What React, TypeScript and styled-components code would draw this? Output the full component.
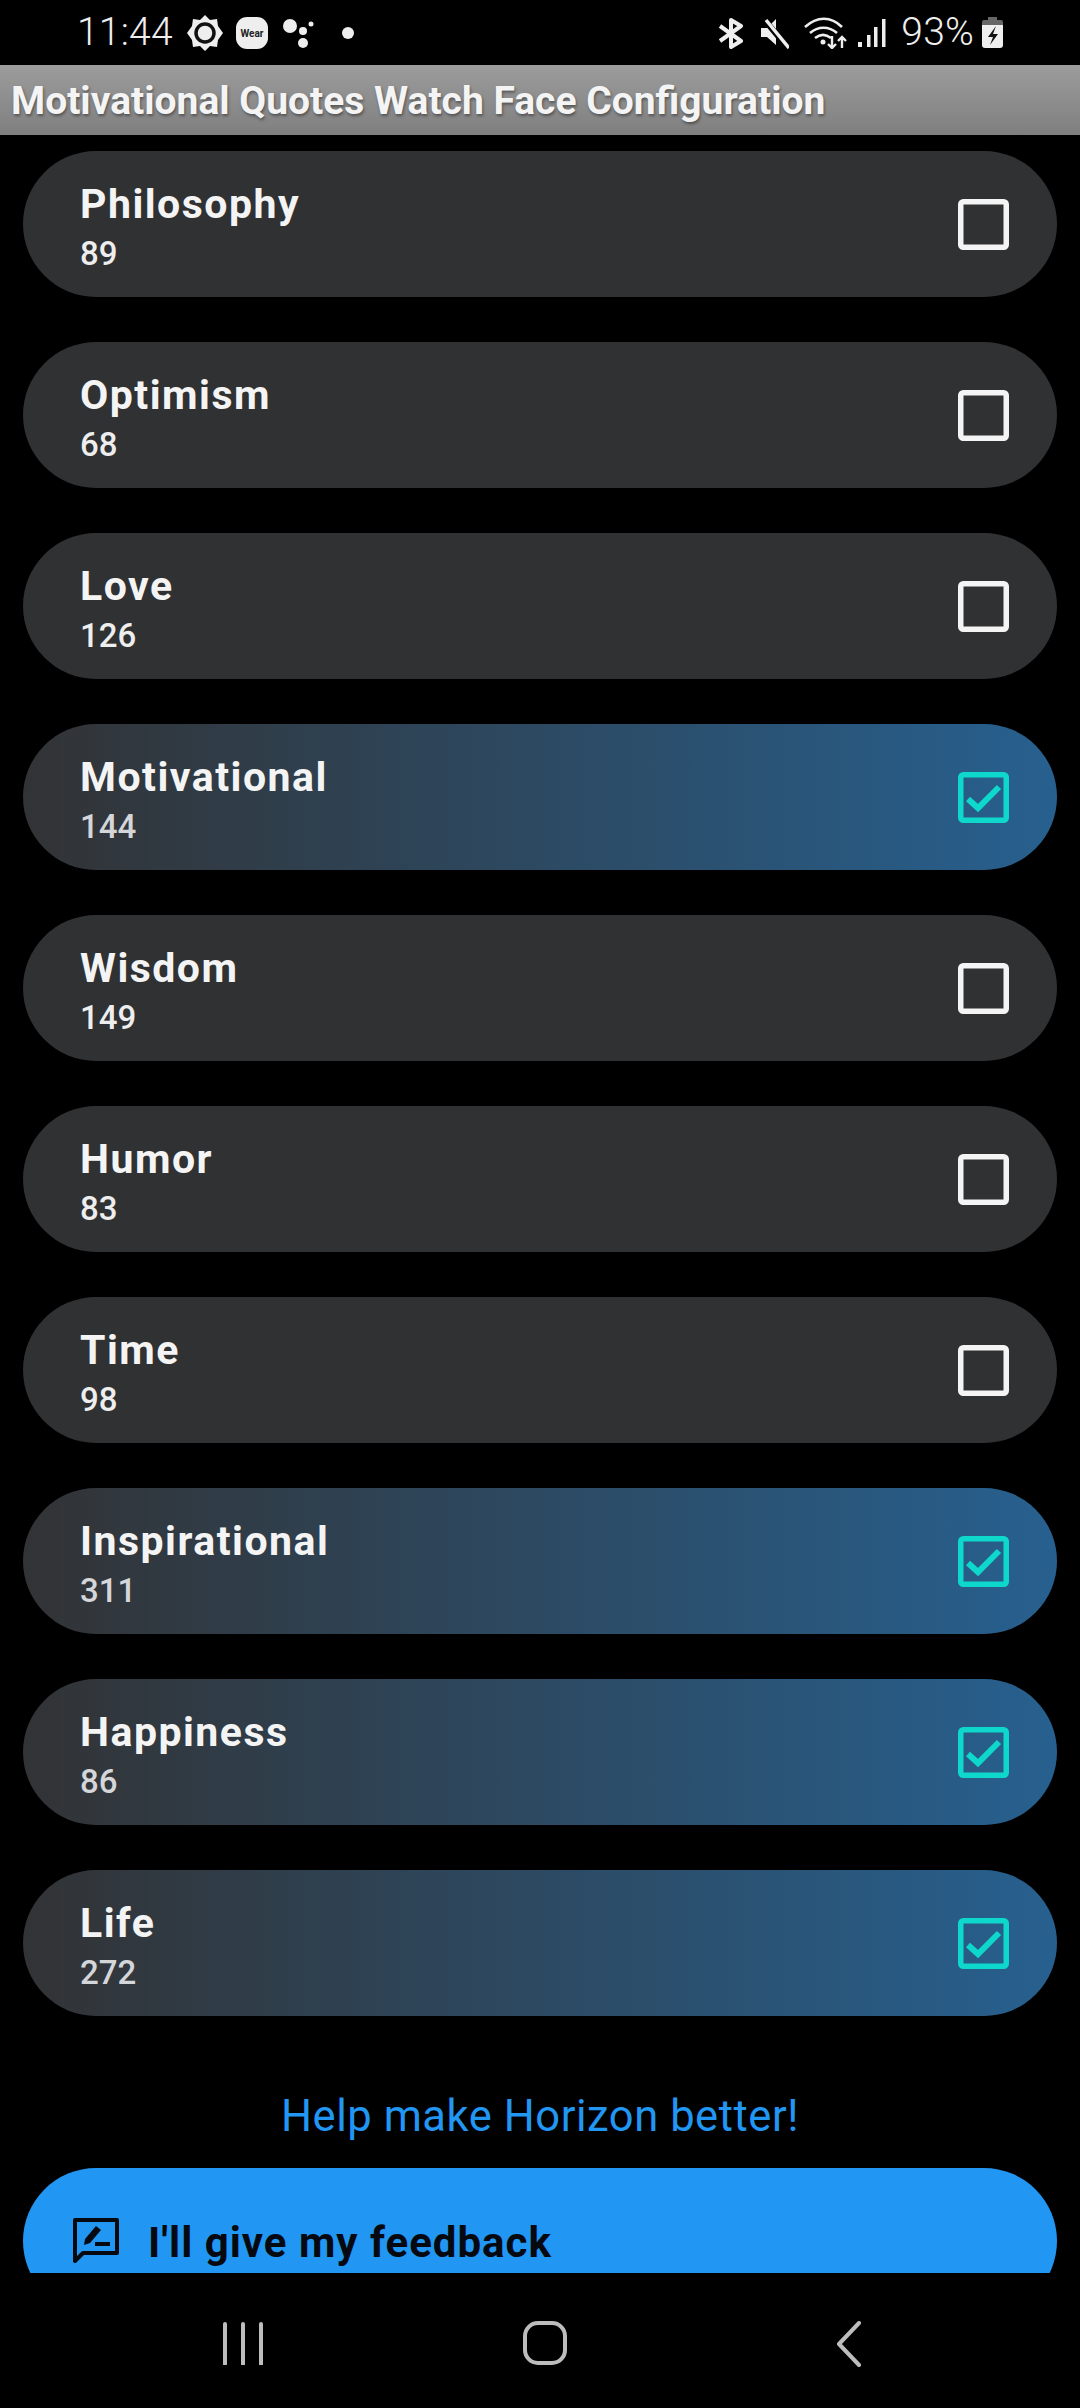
import styled, { createGlobalStyle } from "styled-components";

const GlobalStyle = createGlobalStyle`
  html, body {
    margin: 0;
    padding: 0;
    background: #000;
    font-family: Roboto, "Liberation Sans", sans-serif;
  }
`;

const Page = styled.div`
  width: 1080px;
  height: 2408px;
  display: flex;
  flex-direction: column;
  background: #000;
  overflow: hidden;
`;

const StatusBar = styled.div`
  height: 65px;
  flex: none;
  display: flex;
  align-items: center;
  justify-content: space-between;
  padding: 0 77px;
  color: #eee;
`;

const StatusGroup = styled.div`
  display: flex;
  align-items: center;
`;

const StatusText = styled.span<{ $left?: number }>`
  margin-left: ${(p) => p.$left ?? 0}px;
  font-size: 39px;
  font-weight: 300;
  line-height: 65px;
  letter-spacing: 0.2px;
`;

const StatusIcon = styled.svg<{ $left?: number }>`
  display: block;
  flex: none;
  margin-left: ${(p) => p.$left ?? 0}px;
`;

const Header = styled.header`
  height: 70px;
  flex: none;
  display: flex;
  align-items: center;
  padding-left: 11px;
  background: linear-gradient(#9c9c9c, #7f7f7f);
`;

const HeaderTitle = styled.h1`
  margin: 0;
  padding-top: 2px;
  color: #f4f4f4;
  font-size: 39px;
  font-weight: 700;
  line-height: 68px;
  white-space: nowrap;
  text-shadow: 1px 2px 3px rgba(0, 0, 0, 0.4);
`;

const Content = styled.main`
  flex: 1;
  min-height: 0;
  overflow: hidden;
  padding: 16px 23px 0;
`;

const List = styled.div`
  display: flex;
  flex-direction: column;
  gap: 45px;
`;

const Row = styled.div<{ $checked: boolean }>`
  height: 146px;
  display: flex;
  align-items: center;
  justify-content: space-between;
  padding: 0 48px 0 57px;
  border-radius: 73px;
  background: ${(p) =>
    p.$checked ? "linear-gradient(90deg, #323335, #27608f)" : "#303133"};
`;

const RowText = styled.div`
  display: flex;
  flex-direction: column;
  padding-top: 7px;
`;

const RowTitle = styled.div`
  color: #f4f4f4;
  font-size: 41px;
  font-weight: 700;
  line-height: 53px;
  letter-spacing: 1.5px;
`;

const RowCount = styled.div<{ $checked: boolean }>`
  color: ${(p) => (p.$checked ? "#d5d6da" : "#eeeeee")};
  font-size: 33px;
  font-weight: 500;
  line-height: 46px;
`;

const Checkbox = styled.svg`
  display: block;
  flex: none;
`;

const HelpText = styled.div`
  margin-top: 73px;
  color: #2196f3;
  font-size: 43.5px;
  line-height: 56px;
  text-align: center;
  letter-spacing: 0.55px;
`;

const FeedbackButton = styled.button`
  width: 100%;
  height: 146px;
  margin-top: 23px;
  display: flex;
  align-items: flex-start;
  gap: 29px;
  padding: 50px 0 0 50px;
  border: 0;
  border-radius: 73px;
  background: #2196f3;
  color: #060a10;
  font-family: inherit;
  font-size: 42px;
  font-weight: 700;
  line-height: 50px;
  letter-spacing: 1px;
`;

const NavBar = styled.nav`
  height: 135px;
  flex: none;
  display: grid;
  grid-template-columns: 486px 118px 1fr;
  align-items: start;
  padding-top: 48px;
  box-sizing: border-box;
`;

const NavSlot = styled.div<{ $pad: number }>`
  padding-left: ${(p) => p.$pad}px;
`;

const topics = [
  { name: "Philosophy", count: 89, checked: false },
  { name: "Optimism", count: 68, checked: false },
  { name: "Love", count: 126, checked: false },
  { name: "Motivational", count: 144, checked: true },
  { name: "Wisdom", count: 149, checked: false },
  { name: "Humor", count: 83, checked: false },
  { name: "Time", count: 98, checked: false },
  { name: "Inspirational", count: 311, checked: true },
  { name: "Happiness", count: 86, checked: true },
  { name: "Life", count: 272, checked: true },
];

const TopicCheck = ({ checked }: { checked: boolean }) => (
  <Checkbox width="51" height="51" viewBox="0 0 51 51" fill="none">
    <rect
      x="2.75"
      y="2.75"
      width="45.5"
      height="45.5"
      rx="2.5"
      stroke={checked ? "#0ed8cc" : "#f4f4f4"}
      strokeWidth="5.5"
    />
    {checked && (
      <path d="M10 27l10 9 21-21" stroke="#0ed8cc" strokeWidth="6" />
    )}
  </Checkbox>
);

export default function App() {
  return (
    <Page>
      <GlobalStyle />
      <StatusBar>
        <StatusGroup>
          <StatusText>11:44</StatusText>
          <StatusIcon $left={14} width="36" height="36" viewBox="0 0 36 36">
            <path
              fill="#eee"
              d="M18 0l5 5 7-1 1 7 5 7-5 7-1 7-7-1-5 5-5-5-7 1-1-7-5-7 5-7 1-7 7 1z"
            />
            <circle cx="18" cy="18" r="9" fill="none" stroke="#111" strokeWidth="3.5" />
          </StatusIcon>
          <StatusIcon $left={13} width="32" height="32" viewBox="0 0 32 32">
            <rect width="32" height="32" rx="11" fill="#eee" />
            <text
              x="16"
              y="20"
              textAnchor="middle"
              fontSize="10"
              fontWeight="700"
              fill="#222"
              fontFamily="Roboto, sans-serif"
            >
              Wear
            </text>
          </StatusIcon>
          <StatusIcon $left={14} width="32" height="30" viewBox="0 0 32 30">
            <circle cx="8" cy="8" r="7" fill="#eee" />
            <circle cx="21" cy="13" r="4" fill="#eee" />
            <circle cx="29" cy="6" r="2.5" fill="#eee" />
            <circle cx="21" cy="25" r="5" fill="#eee" />
          </StatusIcon>
          <StatusIcon $left={28} width="12" height="12" viewBox="0 0 12 12">
            <circle cx="6" cy="6" r="6" fill="#eee" />
          </StatusIcon>
        </StatusGroup>
        <StatusGroup>
          <StatusIcon width="26" height="32" viewBox="0 0 26 32" fill="none">
            <path
              d="M2 9l21 15-10 6V3l10 6L2 24"
              stroke="#eee"
              strokeWidth="4"
              strokeLinejoin="round"
            />
          </StatusIcon>
          <StatusIcon $left={16} width="29" height="32" viewBox="0 0 29 32" fill="none">
            <path d="M1 11h6l9-9v26l-9-8H1z" fill="#eee" />
            <path d="M3 1l25 30" stroke="#000" strokeWidth="6" />
            <path d="M6 3l23 28" stroke="#eee" strokeWidth="3.5" />
          </StatusIcon>
          <StatusIcon $left={15} width="44" height="32" viewBox="0 0 44 32" fill="none">
            <path
              d="M1 10c12-11 26-11 37 0M6 16c8-7 19-7 27 0M11 21c5-4 11-4 16 0"
              stroke="#eee"
              strokeWidth="2.6"
            />
            <circle cx="19" cy="25" r="2.5" fill="#eee" />
            <path d="M28 19v12M24 27l4 4 4-4M38 31V20M34 24l4-4 4 4" stroke="#eee" strokeWidth="2.4" />
          </StatusIcon>
          <StatusIcon $left={10} width="28" height="30" viewBox="0 0 28 30">
            <rect x="0" y="24" width="4" height="5" fill="#eee" />
            <rect x="9" y="17" width="3.5" height="12" fill="#eee" />
            <rect x="16" y="9" width="3.5" height="20" fill="#eee" />
            <rect x="24" y="1" width="3.5" height="28" fill="#eee" />
          </StatusIcon>
          <StatusText $left={15}>93%</StatusText>
          <StatusIcon $left={8} width="21" height="31" viewBox="0 0 21 31">
            <path d="M6 0h9v3H6z" fill="#666" />
            <path d="M2 3h17a2 2 0 0 1 2 2v3H0V5a2 2 0 0 1 2-2z" fill="#666" />
            <path d="M0 8h21v20a3 3 0 0 1-3 3H3a3 3 0 0 1-3-3z" fill="#eee" />
            <path d="M14 9l-8 11h5l-3 8 8-11h-5z" fill="#111" />
          </StatusIcon>
        </StatusGroup>
      </StatusBar>
      <Header>
        <HeaderTitle>Motivational Quotes Watch Face Configuration</HeaderTitle>
      </Header>
      <Content>
        <List>
          {topics.map((topic) => (
            <Row key={topic.name} $checked={topic.checked}>
              <RowText>
                <RowTitle>{topic.name}</RowTitle>
                <RowCount $checked={topic.checked}>{topic.count}</RowCount>
              </RowText>
              <TopicCheck checked={topic.checked} />
            </Row>
          ))}
        </List>
        <HelpText>Help make Horizon better!</HelpText>
        <FeedbackButton>
          <svg width="46" height="46" viewBox="0 0 46 46" fill="none">
            <path
              d="M2 2h42v33H10l-8 8z"
              stroke="#060a10"
              strokeWidth="4"
              strokeLinejoin="round"
            />
            <path d="M11 27l1-6 11-13 5 4-11 13z" fill="#060a10" />
            <path d="M22 26h15" stroke="#060a10" strokeWidth="4" />
          </svg>
          <span>I'll give my feedback</span>
        </FeedbackButton>
      </Content>
      <NavBar>
        <NavSlot $pad={222}>
          <svg width="44" height="44" viewBox="0 0 44 44" fill="none">
            <path
              d="M3 3v40M21 3v40M39 3v40"
              stroke="#bdbdbd"
              strokeWidth="4"
              strokeLinecap="round"
            />
          </svg>
        </NavSlot>
        <NavSlot $pad={37}>
          <svg width="44" height="44" viewBox="0 0 44 44" fill="none">
            <rect x="2" y="2" width="40" height="40" rx="13" stroke="#bdbdbd" strokeWidth="4" />
          </svg>
        </NavSlot>
        <NavSlot $pad={232}>
          <svg width="26" height="46" viewBox="0 0 26 46" fill="none">
            <path
              d="M23 2L3 23l20 21"
              stroke="#bdbdbd"
              strokeWidth="4"
              strokeLinecap="round"
              strokeLinejoin="round"
            />
          </svg>
        </NavSlot>
      </NavBar>
    </Page>
  );
}
